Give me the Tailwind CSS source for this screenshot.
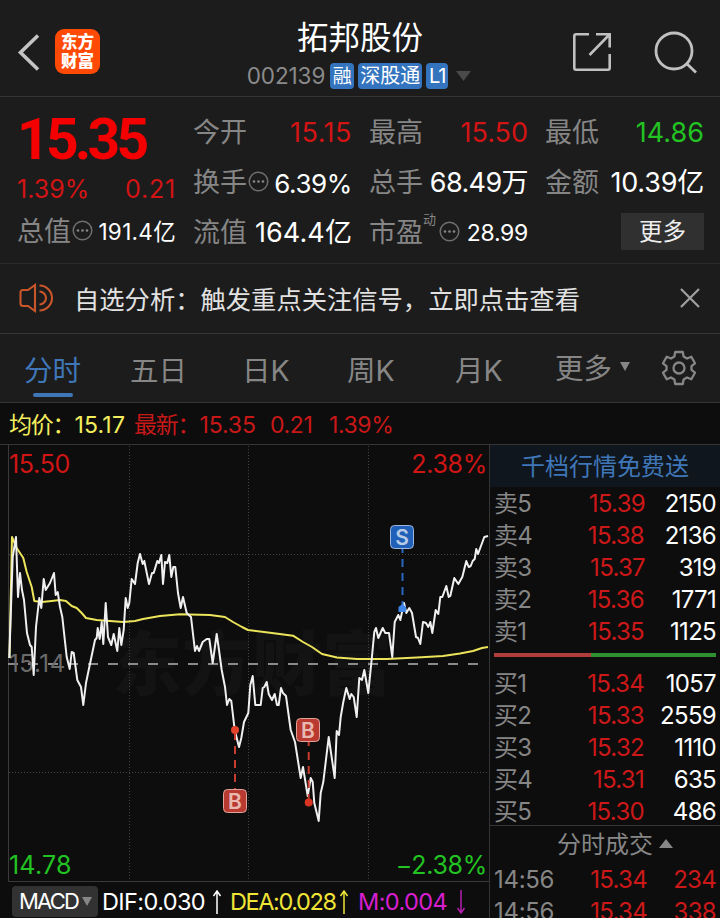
<!DOCTYPE html>
<html lang="zh-CN">
<head>
    <meta charset="UTF-8">
    <meta name="viewport" content="width=device-width, initial-scale=1.0">
    <title>拓邦股份 002139</title>
    <script src="https://cdn.jsdelivr.net/npm/@tailwindcss/browser@4"></script>
</head>
<body class="bg-[#1c1c1c] font-['Inter','Noto_Sans_CJK_SC',sans-serif] text-white w-[720px] h-[918px] overflow-hidden">

    <!-- Header -->
    <header class="h-[97px] border-b border-[#353535] flex justify-between pl-[17px] pr-[23px]">
        <div class="flex items-center w-[200px] pt-[7px]">
            <svg class="w-[24px] h-[40px]" viewBox="0 0 24 40" fill="none" stroke="#c4c4c4" stroke-width="3.6"><path d="M21 3.500L3.500 20.500L21 37.500"/></svg>
            <div class="ml-[14px] w-[45px] h-[45px] rounded-[9px] bg-[#fe4a05] flex flex-col items-center justify-center text-[16.500px] leading-[19px] font-black">
                <span>东方</span>
                <span>财富</span>
            </div>
        </div>
        <div class="flex flex-col items-center pt-[17px] pl-[4px]">
            <h1 class="text-[31.500px] leading-[42px] font-normal pl-[2px]">拓邦股份</h1>
            <div class="flex items-center gap-[4px] h-[34px]">
                <span class="text-[22.500px] text-[#8a8a8a] tracking-[-0.1px] mr-[1px]">002139</span>
                <span class="w-[24px] h-[26px] leading-[27px] rounded-[4px] text-center bg-[#3474be] text-[19px]">融</span>
                <span class="w-[64px] h-[26px] leading-[27px] rounded-[4px] text-center bg-[#3474be] text-[20px]">深股通</span>
                <span class="w-[22px] h-[26px] leading-[26px] rounded-[4px] text-center bg-[#3474be] text-[20px] tracking-[-1px]">L1</span>
                <svg class="w-[15px] h-[10px] ml-[4px]" viewBox="0 0 15 10"><path d="M0 0H15L7.500 10Z" fill="#4a4a4a"/></svg>
            </div>
        </div>
        <div class="flex items-center justify-end gap-[42px] w-[200px] pt-[7px]">
            <svg class="w-[40px] h-[40px]" viewBox="0 0 40 40" fill="none" stroke="#c0c0c0" stroke-width="2.600"><path d="M17 2.300H4Q2.300 2.300 2.300 4V36Q2.300 37.700 4 37.700H36Q37.700 37.700 37.700 36V22M24 2.300H37.700V15.500M37 3L17.500 23"/></svg>
            <svg class="w-[43px] h-[44px]" viewBox="0 0 43 44" fill="none" stroke="#c0c0c0" stroke-width="2.800"><circle cx="20" cy="21" r="18"/><path d="M32 33L42 42.500"/></svg>
        </div>
    </header>

    <!-- Quote -->
    <section class="h-[167px] border-b border-[#2b2b2b] pl-[17px] pr-[16px] pt-[11px] flex gap-[17px] text-[27px] text-[#868686]">
        <div class="w-[159px] flex flex-col">
            <div class="h-[61px] leading-[63px] font-['Roboto'] font-bold text-[57px] tracking-[-3.800px] text-[#f40000]">15.35</div>
            <div class="h-[38px] leading-[40px] flex justify-between text-[25px] text-[#d21414]"><span>1.39%</span><span class="tracking-[0.800px]">0.21</span></div>
            <div class="h-[50px] flex items-center whitespace-nowrap">
                <span>总值</span>
                <svg class="w-[21px] h-[21px] ml-[1px] mb-[4px] shrink-0" viewBox="0 0 21 21"><circle cx="10.500" cy="10.500" r="9.300" fill="none" stroke="#6e6e6e" stroke-width="1.500"/><g fill="#868686"><circle cx="6" cy="10.500" r="1.300"/><circle cx="10.500" cy="10.500" r="1.300"/><circle cx="15" cy="10.500" r="1.300"/></g></svg>
                <span class="ml-auto text-white text-[22.500px] tracking-[0.300px]">191.4亿</span>
            </div>
        </div>
        <div class="w-[159px] flex flex-col *:h-[50px] *:flex *:items-center *:justify-between *:whitespace-nowrap">
            <div><span>今开</span><span class="text-[#d21414] tracking-[0.500px]">15.15</span></div>
            <div><span>换手</span>
                <svg class="w-[21px] h-[21px] mb-[4px] mr-[5px] shrink-0" viewBox="0 0 21 21"><circle cx="10.500" cy="10.500" r="9.300" fill="none" stroke="#6e6e6e" stroke-width="1.500"/><g fill="#868686"><circle cx="6" cy="10.500" r="1.300"/><circle cx="10.500" cy="10.500" r="1.300"/><circle cx="15" cy="10.500" r="1.300"/></g></svg>
                <span class="text-white text-[26px] tracking-[-0.400px]">6.39%</span>
            </div>
            <div><span>流值</span><span class="text-white tracking-[0.100px]">164.4亿</span></div>
        </div>
        <div class="w-[159px] flex flex-col *:h-[50px] *:flex *:items-center *:justify-between *:whitespace-nowrap">
            <div><span>最高</span><span class="text-[#d21414]">15.50</span></div>
            <div><span>总手</span><span class="text-white tracking-[-0.600px]">68.49万</span></div>
            <div><span>市盈</span>
                <span class="text-[13px] self-start leading-[23px] mr-auto">动</span>
                <svg class="w-[21px] h-[21px] mb-[4px] mr-[7px] shrink-0" viewBox="0 0 21 21"><circle cx="10.500" cy="10.500" r="9.300" fill="none" stroke="#6e6e6e" stroke-width="1.500"/><g fill="#868686"><circle cx="6" cy="10.500" r="1.300"/><circle cx="10.500" cy="10.500" r="1.300"/><circle cx="15" cy="10.500" r="1.300"/></g></svg>
                <span class="text-white text-[23px] tracking-[-0.300px]">28.99</span>
            </div>
        </div>
        <div class="w-[159px] flex flex-col *:h-[50px] *:flex *:items-center *:justify-between *:whitespace-nowrap">
            <div><span>最低</span><span class="text-[#22c322]">14.86</span></div>
            <div><span>金额</span><span class="text-white tracking-[-0.200px]">10.39亿</span></div>
            <div><button class="ml-auto w-[83px] h-[37px] mb-[4px] bg-[#303030] text-[#eeeeee] text-[23.500px] leading-[38px]">更多</button></div>
        </div>
    </section>

    <!-- Notice -->
    <section class="h-[70px] border-b border-[#353535] flex items-center pl-[19px] pr-[20px]">
        <svg class="w-[35px] h-[30px] mb-[2px]" viewBox="0 0 35 30" fill="none" stroke="#c9562a" stroke-width="2.100"><path d="M16 2L9 7H4Q1.500 7 1.500 9.500V20.500Q1.500 23 4 23H9L16 28ZM20.500 8.500A6.500 6.500 0 0 1 20.500 21.500M20.500 2.500A12.500 12.500 0 0 1 20.500 27.500"/></svg>
        <p class="ml-[20px] pt-[3px] text-[25.300px] text-[#e2e2e2] whitespace-nowrap">自选分析：触发重点关注信号，立即点击查看</p>
        <svg class="w-[20px] h-[20px] ml-auto mb-[2px]" viewBox="0 0 20 20" stroke="#a0a0a0" stroke-width="2.200"><path d="M1 1L19 19M19 1L1 19"/></svg>
    </section>

    <!-- Period tabs -->
    <nav class="h-[69px] border-b border-[#353535] flex pl-[24px] text-[28.500px] leading-[73px] text-[#868686] whitespace-nowrap">
        <div class="w-[106px] text-[#3f76b8] relative">分时<span class="absolute left-[9px] top-[59px] w-[40px] h-[4px] rounded-full bg-[#3f76b8]"></span></div>
        <div class="w-[112px]">五日</div>
        <div class="w-[105px]">日K</div>
        <div class="w-[108px]">周K</div>
        <div class="w-[100px]">月K</div>
        <div class="w-[106px] flex items-center gap-[8px]">更多<svg class="w-[10px] h-[9px] mb-[4px]" viewBox="0 0 10 9"><path d="M0 0H10L5 9Z" fill="#868686"/></svg></div>
        <svg class="w-[36px] h-[36px] mt-[16px]" viewBox="0 0 36 36" fill="none" stroke="#868686" stroke-width="2.300" stroke-linejoin="round"><path d="M14.200 2H21.800L22.600 6.500L26 8.500L30.300 6.800L34 13.300L30.500 16.100V19.900L34 22.700L30.300 29.200L26 27.500L22.600 29.500L21.800 34H14.200L13.400 29.500L10 27.500L5.700 29.200L2 22.700L5.500 19.900V16.100L2 13.300L5.700 6.800L10 8.500L13.400 6.500Z"/><circle cx="18" cy="18" r="5.500"/></svg>
    </nav>

    <!-- Average and last price -->
    <div class="h-[42px] bg-[#0d0d0d] border-b border-[#353535] pl-[9px] pt-[3px] flex items-center text-[23px] tracking-[-0.400px] text-[#c81818] whitespace-nowrap">
        <span class="w-[125px] text-[#f3ed5e]"><span class="tracking-[-1.200px]">均价：</span><span class="tracking-[0.200px]">15.17</span></span>
        <span class="w-[136px]"><span class="tracking-[-1.200px]">最新：</span><span class="tracking-[-0.100px]">15.35</span></span>
        <span class="w-[59px]">0.21</span>
        <span>1.39%</span>
    </div>

    <div class="flex h-[473px] bg-[#0d0d0d]">
        <div class="w-[489px] flex flex-col">
            <!-- Intraday chart -->
            <svg class="w-[489px] h-[437px] shrink-0 font-['Inter','Noto_Sans_CJK_SC',sans-serif]" viewBox="0 445 489 437" fill="none">
                <text x="112" y="690" font-size="70" font-weight="900" fill="#131313">东方财富</text>
                <path d="M8.500 445V881.500H489" stroke="#3a3a3a"/>
                <path d="M129.500 446V881M248.500 446V881M368.500 446V881M9 554.500H489M9 772.500H489" stroke="#444" stroke-dasharray="1 2"/>
                <path d="M8 664H484" stroke="#8a8a8a" stroke-width="1.800" stroke-dasharray="10 10"/>
                <text x="9" y="672" font-size="24" letter-spacing="0.6" fill="#6b6b6b">15.14</text>
                <polyline stroke="#ece45a" stroke-width="2" stroke-linejoin="round" points="9.500,658 12,537 16.700,548 23.300,558 26.700,572 31.700,587 34.300,601 41.700,602 51.700,601 60,600 66,601 71.700,606 76.700,608 81.700,613 86,618 96.700,620 123.300,622 135,621 143,619 160,616 180,614.300 210,615 225,617 233,622 242,627 248,630 270,632.700 293,635.700 303,642 312,647 322,654 337,657.500 357,659 387,659 417,657.500 443,656 460,653.500 473,651 482,648 488,647"/>
                <polyline stroke="#f0f0f0" stroke-width="2" stroke-linejoin="round" points="9.300,658 12.700,557 16,537 18,597 20,573 22,590 24,600 27,633 30,645 31.700,647 33.700,675 36,627 39.300,598 41.300,608 43.700,579 45.700,590 50,583 54,573 55.700,595 57.700,592 60,607 62.300,617 66.700,657 69.700,669 71.700,652 73.700,653 77.300,680 81,687 83.300,705 86,683 88.700,670 95,640 96.700,638 97.700,628 99.700,639 101.700,622 103.300,644 105.700,603 108,637 111.300,645 113.700,634 117.300,651 119.300,628 121.300,645 123.700,630 125.700,598 127.700,608 129.300,603 131.700,579 135,584 137.700,563 140,554 142.700,564 144.300,561 149,584 152,573 153.700,573 157.300,561 159,563 161.300,555 163,584 165,562 167.300,563 169.300,555 171.300,577 173.300,567 175.300,567 178,593 180.700,608 183,597 186.700,613 191,617 195,651 197,646 199,651 202.700,642 206.700,639 209.300,639 212.700,663 216.700,634 219,650 221.700,670 225,687 227,705 229.300,699 231.300,701 234.700,730 239,747 241.300,738 244,722 248.300,713 250.300,685 252.700,676 255.300,705 260.700,705 262.700,688 264.300,687 266.700,682 268.700,694 272,700 274.700,694 277,705 278.700,705 281,688 283,693 286,696 290.700,730 295,742 300.700,778 303,767 307.700,796 310.700,778 312.700,782 314.300,803 318.700,821 320.700,793 323.300,782 328.700,737 334.700,778 336.700,731 339,735 340.700,717 343.300,702 346.300,688 349.700,699 351.300,694 353.700,697 356.700,717 359.300,678 362,680 364.300,670 368.300,693 372.300,653 374.300,632 376,628 378.300,638 382.700,628 385.300,633 389,633 392.300,657 394.700,622 398.300,615 400.300,620 404,603 406.300,613 409.300,608 412,613 416,637 418,638 420.300,644 423,622 426,623 428.300,627 430.300,622 432.300,633 435.700,610 438.300,614 440.300,597 442.300,597 446.300,586 448.700,597 450.300,596 454.300,578 458.300,584 462.300,577 466.300,561 468.700,567 470.700,566 472.700,561 474.700,559 476.300,549 478,554 484.300,537 488,536"/>
                <!-- Trade markers -->
                <path d="M402.500 549V608" stroke="#2868c0" stroke-width="2" stroke-dasharray="8 6" stroke-dashoffset="4"/>
                <path d="M398.500 612V607L402.500 604L406 607V612Z" fill="#3d86e8"/>
                <rect x="390.500" y="525.500" width="23" height="23" rx="4" fill="#2060b8" stroke="#9fb8dc"/>
                <text x="402" y="545" font-size="21" font-weight="600" text-anchor="middle" fill="#b9cbe6">S</text>
                <path d="M235 730V789" stroke="#c83c30" stroke-width="2" stroke-dasharray="8 6" stroke-dashoffset="-2"/>
                <circle cx="235" cy="730" r="4" fill="#e2432c"/>
                <rect x="223.500" y="789.500" width="23" height="23" rx="4" fill="#b93a30" stroke="#e0a49c"/>
                <text x="235" y="808.500" font-size="21" font-weight="600" text-anchor="middle" fill="#e8b8b0">B</text>
                <path d="M308.700 742V800" stroke="#c83c30" stroke-width="2" stroke-dasharray="8 6" stroke-dashoffset="4"/>
                <circle cx="308.700" cy="802.500" r="4" fill="#d83422"/>
                <rect x="296.500" y="718.500" width="23" height="23" rx="4" fill="#b93a30" stroke="#e0a49c"/>
                <text x="308" y="737.500" font-size="21" font-weight="600" text-anchor="middle" fill="#e8b8b0">B</text>
                <!-- Axis labels -->
                <g font-size="25" letter-spacing="-0.3">
                    <text x="9" y="473" fill="#d01515">15.50</text>
                    <text x="487" y="473" text-anchor="end" fill="#d01515">2.38%</text>
                    <text x="9" y="874" letter-spacing="0.2" fill="#22c322">14.78</text>
                    <text x="487" y="874" text-anchor="end" fill="#22c322">−2.38%</text>
                </g>
            </svg>
            <!-- MACD -->
            <div class="h-[36px] flex items-center pl-[12px] pb-[2px] pt-[5px] text-[23.500px] tracking-[-0.600px] whitespace-nowrap">
                <div class="w-[86px] h-[31px] rounded-[4px] bg-[#323232] flex items-center gap-[6px] pl-[7px] mr-[4px] text-[22px]"><span class="w-[57px] tracking-[-1.800px]">MACD</span><svg class="w-[10px] h-[9px]" viewBox="0 0 10 9"><path d="M0 0H10L5 9Z" fill="#868686"/></svg></div>
                <span class="w-[110px]">DIF:0.030</span>
                <svg class="w-[10px] h-[24px] mr-[8px]" viewBox="0 0 10 24" fill="none" stroke="#fff" stroke-width="1.500"><path d="M5 24V1M1.500 6L5 1L8.500 6"/></svg>
                <span class="w-[109px] text-[#f0e436] tracking-[-1.400px]">DEA:0.028</span>
                <svg class="w-[10px] h-[24px] mr-[9px]" viewBox="0 0 10 24" fill="none" stroke="#f0e436" stroke-width="1.500"><path d="M5 24V1M1.500 6L5 1L8.500 6"/></svg>
                <span class="w-[98px] text-[#d81fd0]">M:0.004</span>
                <svg class="w-[10px] h-[24px]" viewBox="0 0 10 24" fill="none" stroke="#b41cae" stroke-width="1.500"><path d="M5 0V23M1.500 18L5 23L8.500 18"/></svg>
            </div>
        </div>

        <!-- Order book -->
        <div class="w-[231px] border-l border-[#353535] text-[24px] whitespace-nowrap">
            <div class="h-[42px] leading-[43px] bg-[#10161d] text-center text-[#3f76b8]">千档行情免费送</div>
            <div class="pl-[4px] pr-[4px] pt-px *:h-[32px] *:flex *:items-center tracking-[-0.700px]">
                <div><span class="w-[70px] text-[#868686]">卖5</span><span class="w-[81px] text-right text-[#cc1818]">15.39</span><span class="ml-auto">2150</span></div>
                <div><span class="w-[70px] text-[#868686]">卖4</span><span class="w-[80px] text-right text-[#cc1818]">15.38</span><span class="ml-auto">2136</span></div>
                <div><span class="w-[70px] text-[#868686]">卖3</span><span class="w-[81px] text-right text-[#cc1818]">15.37</span><span class="ml-auto">319</span></div>
                <div><span class="w-[70px] text-[#868686]">卖2</span><span class="w-[80px] text-right text-[#cc1818]">15.36</span><span class="ml-auto">1771</span></div>
                <div><span class="w-[70px] text-[#868686]">卖1</span><span class="w-[80px] text-right text-[#cc1818]">15.35</span><span class="ml-auto">1125</span></div>
            </div>
            <div class="flex h-[4px] mt-[5px] ml-[4px] mr-[4px] mb-[10px]"><div class="w-[97px] bg-[#b03c3c]"></div><div class="flex-1 bg-[#2f9030]"></div></div>
            <div class="pl-[4px] pr-[4px] pt-px *:h-[32px] *:flex *:items-center tracking-[-0.700px]">
                <div><span class="w-[70px] text-[#868686]">买1</span><span class="w-[80px] text-right text-[#cc1818]">15.34</span><span class="ml-auto">1057</span></div>
                <div><span class="w-[70px] text-[#868686]">买2</span><span class="w-[80px] text-right text-[#cc1818]">15.33</span><span class="ml-auto">2559</span></div>
                <div><span class="w-[70px] text-[#868686]">买3</span><span class="w-[80px] text-right text-[#cc1818]">15.32</span><span class="ml-auto">1110</span></div>
                <div><span class="w-[70px] text-[#868686]">买4</span><span class="w-[80px] text-right text-[#cc1818]">15.31</span><span class="ml-auto">635</span></div>
                <div><span class="w-[70px] text-[#868686]">买5</span><span class="w-[80px] text-right text-[#cc1818]">15.30</span><span class="ml-auto">486</span></div>
            </div>
            <div class="border-t border-[#353535] h-[38px] -mt-[3px] pt-px flex items-center gap-[6px] text-[#868686] pl-[67px]">分时成交<svg class="w-[14px] h-[9px] mb-[4px]" viewBox="0 0 14 9"><path d="M0 9H14L7 0Z" fill="#868686"/></svg></div>
            <div class="pl-[4px] pr-[4px] pt-px *:h-[32px] *:flex *:items-center tracking-[-0.700px]">
                <div><span class="w-[70px] text-[#868686] tracking-[-0.300px]">14:56</span><span class="w-[83px] text-right text-[#cc1818]">15.34</span><span class="ml-auto text-[#cc1818]">234</span></div>
                <div><span class="w-[70px] text-[#868686] tracking-[-0.300px]">14:56</span><span class="w-[83px] text-right text-[#cc1818]">15.34</span><span class="ml-auto text-[#cc1818]">338</span></div>
            </div>
        </div>
    </div>
</body>
</html>
